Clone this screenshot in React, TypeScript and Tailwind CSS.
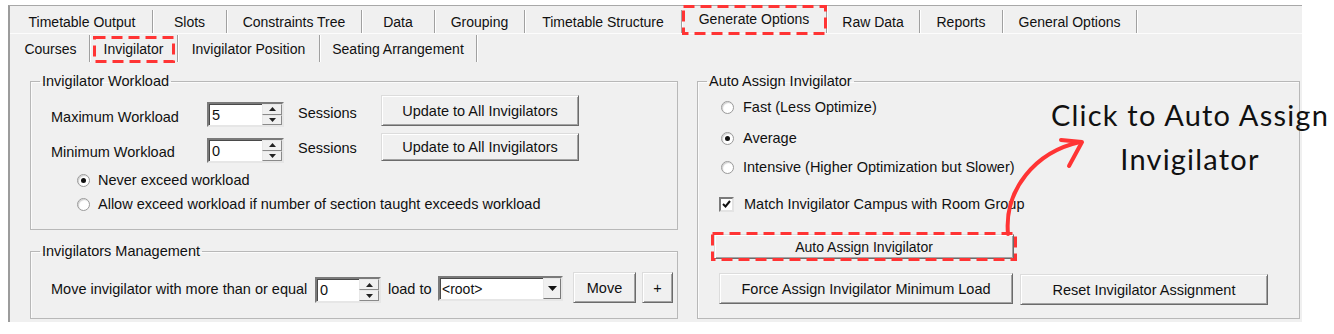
import React from "react";

const TOP_TABS = [
  { label: "Timetable Output", w: "w-[141px]" },
  { label: "Slots", w: "w-[74px]" },
  { label: "Constraints Tree", w: "w-[135px]" },
  { label: "Data", w: "w-[73px]" },
  { label: "Grouping", w: "w-[90px]" },
  { label: "Timetable Structure", w: "w-[157px]" },
  { label: "Generate Options", w: "w-[145px]", active: true },
  { label: "Raw Data", w: "w-[93px]" },
  { label: "Reports", w: "w-[83px]" },
  { label: "General Options", w: "w-[134px]" },
];

const SUB_TABS = [
  { label: "Courses", w: "w-[78px]" },
  { label: "Invigilator", w: "w-[88px]" },
  { label: "Invigilator Position", w: "w-[142px]" },
  { label: "Seating Arrangement", w: "w-[157px]" },
];

const BTN =
  "flex items-center justify-center bg-[#f0f0f0] border border-t-[#dcdcdc] border-l-[#dcdcdc] border-r-[#6b6b6b] border-b-[#6b6b6b] shadow-[inset_1px_1px_0_#ffffff,inset_-1px_-1px_0_#a3a3a3] leading-[16px]";

const SUNKEN =
  "flex bg-white border-2 border-t-[#7a7a7a] border-l-[#7a7a7a] border-r-[#e6e6e6] border-b-[#e6e6e6] shadow-[inset_1px_1px_0_#4a4a4a]";

function Group({ title, className, children }: { title: string; className: string; children: React.ReactNode }) {
  return (
    <fieldset className={`border border-[#b8b8b8] shadow-[inset_1px_1px_0_#fbfbfb] ${className}`}>
      <legend className="ml-[9px] px-[2px] leading-[16px]">{title}</legend>
      {children}
    </fieldset>
  );
}

function SpinArrow({ up }: { up?: boolean }) {
  return (
    <div className="flex-1 flex items-center justify-center bg-[#f0f0f0] border border-t-[#e8e8e8] border-l-[#e8e8e8] border-r-[#8a8a8a] border-b-[#8a8a8a]">
      <svg width="7" height="4" viewBox="0 0 7 4">
        {up ? <path d="M3.5 0L7 4H0z" fill="#222" /> : <path d="M0 0h7L3.5 4z" fill="#222" />}
      </svg>
    </div>
  );
}

function Spin({ value, className }: { value: string; className: string }) {
  return (
    <div className={`${SUNKEN} ${className}`}>
      <div className="flex-1 flex items-center pl-[3px] leading-[16px]">{value}</div>
      <div className="w-[20px] flex flex-col">
        <SpinArrow up />
        <SpinArrow />
      </div>
    </div>
  );
}

function Radio({ checked }: { checked?: boolean }) {
  return (
    <span className="w-[13px] h-[13px] shrink-0 rounded-full border border-[#9a9a9a] bg-white flex items-center justify-center shadow-[inset_1px_1px_1px_#cfcfcf]">
      {checked && <span className="w-[5px] h-[5px] rounded-full bg-[#111]" />}
    </span>
  );
}

export default function App() {
  return (
    <div className="relative w-[1334px] h-[334px] overflow-hidden bg-white text-[14.5px] text-[#111] font-['Liberation_Sans',Arial,sans-serif]">
      <div className="ml-[8px] mt-[5px] w-[1294px] h-[317px] bg-[#f0f0f0] border-t border-t-[#a8a8a8] border-l-2 border-l-[#9c9c9c] flex flex-col">
        {/* main tabs */}
        <div className="flex items-end h-[28px] pl-[2px] border-b border-b-[#fcfcfc]">
          {TOP_TABS.map((t) => (
            <div
              key={t.label}
              className={`${t.w} flex items-center justify-center border-r border-r-[#a0a0a0] shadow-[1px_0_0_#ffffff] text-[14px] leading-[16px] ${t.active ? "h-[27px] pb-[1px]" : "h-[23px]"}`}
            >
              {t.label}
            </div>
          ))}
        </div>

        {/* sub tabs */}
        <div className="flex h-[29px] pl-[2px]">
          {SUB_TABS.map((t) => (
            <div
              key={t.label}
              className={`${t.w} my-[1px] flex items-center justify-center border-r border-r-[#a0a0a0] shadow-[1px_0_0_#ffffff] text-[14px] leading-[16px]`}
            >
              {t.label}
            </div>
          ))}
        </div>

        {/* page */}
        <div className="flex ml-[20px] mt-[10px]">
          <div className="flex flex-col">
            <Group title="Invigilator Workload" className="w-[648px] h-[157px]">
              <div className="flex items-start pl-[20px] mt-[6px]">
                <div className="w-[156px] mt-[14px] leading-[16px]">Maximum Workload</div>
                <Spin value="5" className="w-[77px] h-[25px] mt-[7px]" />
                <div className="w-[83px] ml-[14px] mt-[10px] leading-[16px]">Sessions</div>
                <button className={`${BTN} w-[198px] h-[31px]`}>Update to All Invigilators</button>
              </div>
              <div className="flex items-start pl-[20px] mt-[6px]">
                <div className="w-[156px] mt-[11px] leading-[16px]">Minimum Workload</div>
                <Spin value="0" className="w-[77px] h-[25px] mt-[5px]" />
                <div className="w-[83px] ml-[14px] mt-[7px] leading-[16px]">Sessions</div>
                <button className={`${BTN} w-[198px] h-[28px]`}>Update to All Invigilators</button>
              </div>
              <div className="flex items-center gap-[8px] pl-[46px] mt-[9px] leading-[16px]">
                <Radio checked />
                <span>Never exceed workload</span>
              </div>
              <div className="flex items-center gap-[8px] pl-[46px] mt-[8px] leading-[16px]">
                <Radio />
                <span>Allow exceed workload if number of section taught exceeds workload</span>
              </div>
            </Group>

            <Group title="Invigilators Management" className="w-[648px] h-[76px] mt-[13px]">
              <div className="flex items-start pl-[20px] mt-[13px]">
                <div className="w-[264px] mt-[9px] leading-[16px]">Move invigilator with more than or equal</div>
                <Spin value="0" className="w-[66px] h-[26px] mt-[5px]" />
                <div className="w-[50px] ml-[7px] mt-[9px] leading-[16px]">load to</div>
                <div className={`${SUNKEN} w-[125px] h-[25px] mt-[4px]`}>
                  <div className="flex-1 flex items-center pl-[2px] text-[14px] leading-[16px]">&lt;root&gt;</div>
                  <div className="w-[18px] flex items-center justify-center bg-[#f0f0f0] border border-t-[#e8e8e8] border-l-[#e8e8e8] border-r-[#7a7a7a] border-b-[#7a7a7a]">
                    <svg width="9" height="5" viewBox="0 0 9 5">
                      <path d="M0 0h9L4.5 5z" fill="#111" />
                    </svg>
                  </div>
                </div>
                <button className={`${BTN} w-[63px] h-[31px] ml-[10px]`}>Move</button>
                <button className={`${BTN} w-[31px] h-[31px] ml-[6px]`}>+</button>
              </div>
            </Group>
          </div>

          <Group title="Auto Assign Invigilator" className="w-[603px] h-[246px] ml-[19px]">
            <div className="flex items-center gap-[9px] pl-[23px] mt-[10px] leading-[16px]">
              <Radio />
              <span>Fast (Less Optimize)</span>
            </div>
            <div className="flex items-center gap-[9px] pl-[23px] mt-[15px] leading-[16px]">
              <Radio checked />
              <span>Average</span>
            </div>
            <div className="flex items-center gap-[9px] pl-[23px] mt-[13px] leading-[16px]">
              <Radio />
              <span>Intensive (Higher Optimization but Slower)</span>
            </div>
            <div className="flex items-center gap-[10px] pl-[21px] mt-[21px] leading-[16px]">
              <span className="w-[15px] h-[15px] flex items-center justify-center bg-white border-2 border-t-[#7a7a7a] border-l-[#7a7a7a] border-r-[#e3e3e3] border-b-[#e3e3e3]">
                <svg width="9" height="8" viewBox="0 0 9 8">
                  <path d="M1 4l2.5 2.5L8 1" fill="none" stroke="#111" strokeWidth="2" />
                </svg>
              </span>
              <span>Match Invigilator Campus with Room Group</span>
            </div>
            <button className={`${BTN} w-[300px] h-[25px] ml-[16px] mt-[22px] text-[14px]`}>Auto Assign Invigilator</button>
            <div className="flex items-start ml-[21px] mt-[14px]">
              <button className={`${BTN} w-[294px] h-[31px]`}>Force Assign Invigilator Minimum Load</button>
              <button className={`${BTN} w-[248px] h-[31px] ml-[7px] mt-[1px]`}>Reset Invigilator Assignment</button>
            </div>
          </Group>
        </div>
      </div>

      {/* annotation overlay */}
      <svg className="absolute left-0 top-0 pointer-events-none" width="1334" height="334">
        <g fill="none" stroke="#ff3434" strokeWidth="3" strokeDasharray="11 6">
          <rect x="683.5" y="6.5" width="142" height="27" />
          <rect x="94.5" y="37.5" width="79" height="24" />
          <rect x="712.5" y="233.5" width="303" height="26" />
        </g>
        <g fill="none" stroke="#ff3434" strokeWidth="4" strokeLinecap="round" strokeLinejoin="round">
          <path d="M1008 234C1004 190 1035 152 1080 142" />
          <path d="M1061 140L1082 142L1069 166" />
        </g>
      </svg>
      <div className="absolute left-[1048px] top-[93px] w-[284px] text-center text-[29px] tracking-[1.2px] leading-[44px] text-[#111] font-['Lato',sans-serif] whitespace-nowrap">
        Click to Auto Assign
        <br />
        Invigilator
      </div>
    </div>
  );
}
